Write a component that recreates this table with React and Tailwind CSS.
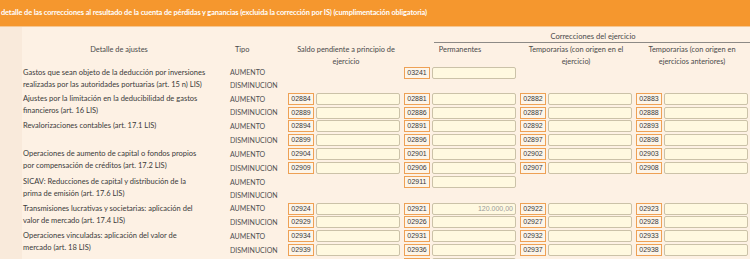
import React from 'react';

const FONT = { fontFamily: 'Lato, "Liberation Sans", sans-serif' };

// each group: label lines + two sub rows (AUMENTO / DISMINUCION)
// cells: [saldo, permanentes, temporarias ejercicio, temporarias anteriores]
const groups = [
    {
        label: ['Gastos que sean objeto de la deducción por inversiones', 'realizadas por las autoridades portuarias (art. 15 n) LIS)'],
        rows: [
            { tipo: 'AUMENTO', h: 'h-[13px]', cells: [null, { code: '03241' }, null, null] },
            { tipo: 'DISMINUCION', h: 'h-[13px]', cells: [null, null, null, null] },
        ],
    },
    {
        label: ['Ajustes por la limitación en la deducibilidad de gastos', 'financieros (art. 16 LIS)'],
        rows: [
            { tipo: 'AUMENTO', h: 'h-[14px]', cells: [{ code: '02884' }, { code: '02881' }, { code: '02882' }, { code: '02883' }] },
            { tipo: 'DISMINUCION', h: 'h-[13px]', cells: [{ code: '02889' }, { code: '02886' }, { code: '02887' }, { code: '02888' }] },
        ],
    },
    {
        label: ['Revalorizaciones contables (art. 17.1 LIS)'],
        rows: [
            { tipo: 'AUMENTO', h: 'h-[14px]', cells: [{ code: '02894' }, { code: '02891' }, { code: '02892' }, { code: '02893' }] },
            { tipo: 'DISMINUCION', h: 'h-[14px]', cells: [{ code: '02899' }, { code: '02896' }, { code: '02897' }, { code: '02898' }] },
        ],
    },
    {
        label: ['Operaciones de aumento de capital o fondos propios', 'por compensación de créditos (art. 17.2 LIS)'],
        rows: [
            { tipo: 'AUMENTO', h: 'h-[14px]', cells: [{ code: '02904' }, { code: '02901' }, { code: '02902' }, { code: '02903' }] },
            { tipo: 'DISMINUCION', h: 'h-[14px]', cells: [{ code: '02909' }, { code: '02906' }, { code: '02907' }, { code: '02908' }] },
        ],
    },
    {
        label: ['SICAV: Reducciones de capital y distribución de la', 'prima de emisión (art. 17.6 LIS)'],
        rows: [
            { tipo: 'AUMENTO', h: 'h-[14px]', cells: [null, { code: '02911' }, null, null] },
            { tipo: 'DISMINUCION', h: 'h-[13px]', cells: [null, null, null, null] },
        ],
    },
    {
        label: ['Transmisiones lucrativas y societarias: aplicación del', 'valor de mercado (art. 17.4 LIS)'],
        rows: [
            { tipo: 'AUMENTO', h: 'h-[13px]', cells: [{ code: '02924' }, { code: '02921', value: '120.000,00' }, { code: '02922' }, { code: '02923' }] },
            { tipo: 'DISMINUCION', h: 'h-[14px]', cells: [{ code: '02929' }, { code: '02926' }, { code: '02927' }, { code: '02928' }] },
        ],
    },
    {
        label: ['Operaciones vinculadas: aplicación del valor de', 'mercado (art. 18 LIS)'],
        rows: [
            { tipo: 'AUMENTO', h: 'h-[14px]', cells: [{ code: '02934' }, { code: '02931' }, { code: '02932' }, { code: '02933' }] },
            { tipo: 'DISMINUCION', h: 'h-[14px]', cells: [{ code: '02939' }, { code: '02936' }, { code: '02937' }, { code: '02938' }] },
        ],
    },
    {
        // next row, only its top edge shows
        label: [],
        rows: [
            { tipo: '', h: 'h-[14px]', cells: [null, { code: '' }, null, null] },
        ],
    },
];

const Cell = ({ cell }) => (
    <div className="w-[116px] flex items-center">
        {cell && (
            <>
                <div
                    className="w-[26px] h-[12px] border border-[#eea155] bg-[#fdf5e9] text-[#3a3a3a] text-[7px] leading-[10px] text-center"
                    style={{ fontFamily: '"Liberation Sans", sans-serif' }}
                >
                    {cell.code}
                </div>
                <div
                    className="ml-[2px] w-[84px] h-[12px] border border-[#cbc2a8] rounded-[2px] bg-[#fff9e0] text-[#9a9a9a] text-[7px] leading-[10px] text-right pr-[2px]"
                    style={{ fontFamily: '"Liberation Sans", sans-serif' }}
                >
                    {cell.value || ''}
                </div>
            </>
        )}
    </div>
);

export default function App() {
    return (
        <div className="w-[750px] h-[259px] overflow-hidden bg-[#fdf1e4]" style={FONT}>
            {/* Title bar */}
            <div className="h-[27px] bg-[#f5972e] border-b border-[#f6c792] flex items-center">
                <span className="pl-[1px] text-white font-bold text-[7.4px] whitespace-nowrap tracking-[-0.12px]">
                    detalle de las correcciones al resultado de la cuenta de pérdidas y ganancias (excluida la corrección por IS) (cumplimentación obligatoria)
                </span>
            </div>

            <div className="flex">
                <div className="w-[22px] bg-[#f9eadb] shrink-0" />
                <div className="flex-1 text-[#3d3d3d] text-[7.6px]">
                    {/* Header row 1 */}
                    <div className="flex">
                        <div className="w-[412px]" />
                        <div className="flex-1 h-[16px] border-b border-[#8d8a86] pt-[3px] leading-[12px] text-center text-[#4a4a4a]">
                            Correcciones del ejercicio
                        </div>
                    </div>

                    {/* Header row 2 */}
                    <div className="flex h-[23px] pt-[1px] leading-[12px] text-[#4a4a4a] text-[7.4px]">
                        <div className="w-[206px] text-center pr-[12px]">Detalle de ajustes</div>
                        <div className="w-[60px] pl-[7px]">Tipo</div>
                        <div className="w-[116px] text-center pl-[4px] pr-[4px]">
                            Saldo pendiente a principio de
                            <br />
                            ejercicio
                        </div>
                        <div className="w-[116px] text-center pr-[4px]">Permanentes</div>
                        <div className="w-[116px] text-center pr-[4px]">
                            Temporarias (con origen en el
                            <br />
                            ejercicio)
                        </div>
                        <div className="w-[116px] text-center pr-[4px]">
                            Temporarias (con origen en
                            <br />
                            ejercicios anteriores)
                        </div>
                    </div>

                    {/* Rows */}
                    {groups.map((g, gi) => (
                        <div key={gi} className="flex">
                            <div className="w-[206px] pt-[1px] pl-[1px] leading-[12px] text-[7.5px] text-[#3a3a3a]">
                                {g.label.map((l, li) => (
                                    <div key={li} className="whitespace-nowrap">{l}</div>
                                ))}
                            </div>
                            <div className="flex flex-col">
                                {g.rows.map((r, ri) => (
                                    <div key={ri} className={`flex items-center ${r.h}`}>
                                        <div className="w-[60px] pl-[2px] text-[#505050] text-[7px]">{r.tipo}</div>
                                        {r.cells.map((c, ci) => (
                                            <Cell key={ci} cell={c} />
                                        ))}
                                    </div>
                                ))}
                            </div>
                        </div>
                    ))}
                </div>
            </div>
        </div>
    );
}
